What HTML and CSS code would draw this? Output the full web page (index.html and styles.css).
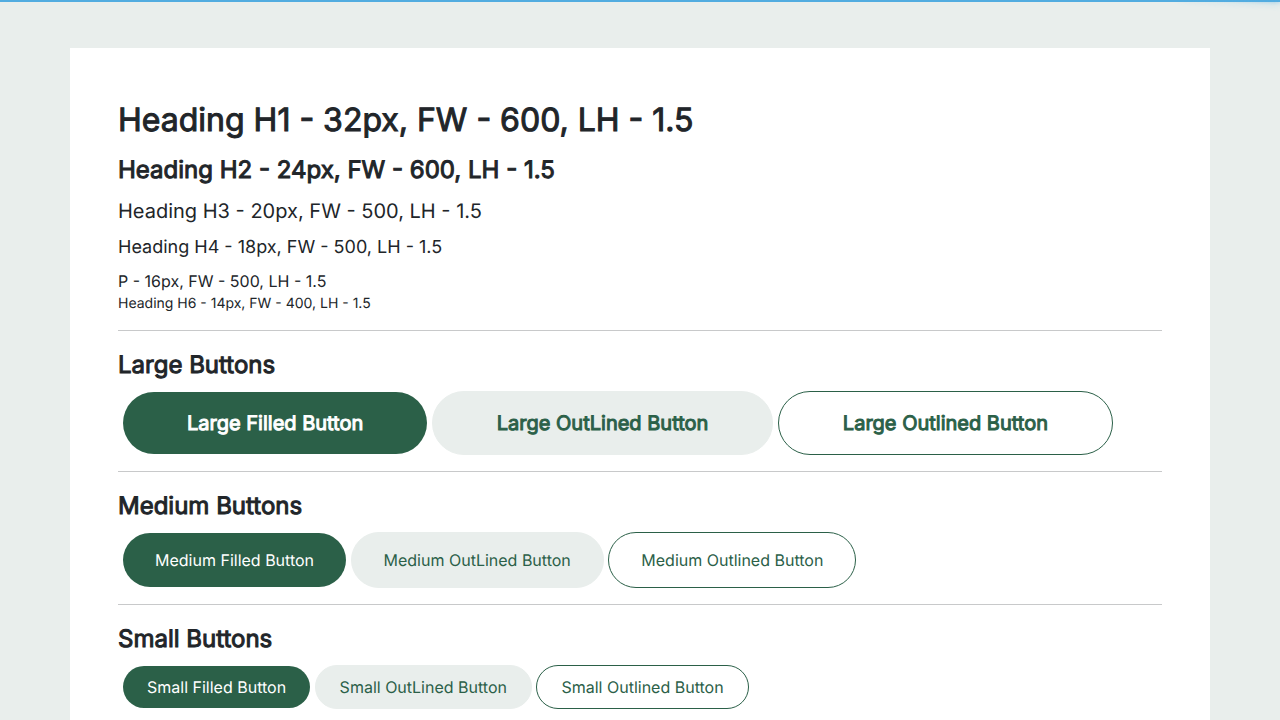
FILE: index.html
```html
<!DOCTYPE html>
<html lang="en">
<head>
<meta charset="utf-8">
<title>Style Guide</title>
<link rel="stylesheet" href="styles.css">
</head>
<body>
<div class="progress"><div class="progress-glow"></div></div>
<main class="container">
  <h1>Heading H1 - 32px, FW - 600, LH - 1.5</h1>
  <h2>Heading H2 - 24px, FW - 600, LH - 1.5</h2>
  <h3>Heading H3 - 20px, FW - 500, LH - 1.5</h3>
  <h4>Heading H4 - 18px, FW - 500, LH - 1.5</h4>
  <p>P - 16px, FW - 500, LH - 1.5</p>
  <h6>Heading H6 - 14px, FW - 400, LH - 1.5</h6>
  <hr>
  <h2>Large Buttons</h2>
  <div class="row">
    <button type="button" class="btn large filled">Large Filled Button</button>
    <button type="button" class="btn large soft">Large OutLined Button</button>
    <button type="button" class="btn large outlined">Large Outlined Button</button>
  </div>
  <hr>
  <h2>Medium Buttons</h2>
  <div class="row">
    <button type="button" class="btn medium filled">Medium Filled Button</button>
    <button type="button" class="btn medium soft">Medium OutLined Button</button>
    <button type="button" class="btn medium outlined">Medium Outlined Button</button>
  </div>
  <hr>
  <h2>Small Buttons</h2>
  <div class="row">
    <button type="button" class="btn small filled">Small Filled Button</button>
    <button type="button" class="btn small soft">Small OutLined Button</button>
    <button type="button" class="btn small outlined">Small Outlined Button</button>
  </div>
</main>
</body>
</html>
```
FILE: styles.css
```css
* { box-sizing: border-box; }
body {
  margin: 0;
  background: #e9eeec;
  color: #212529;
  font-family: Inter, sans-serif;
  font-size: 16px;
  font-weight: 380;
  line-height: 1.5;
  text-rendering: geometricPrecision;
}
.progress {
  position: fixed;
  top: 0;
  left: 0;
  right: 0;
  height: 2px;
  background: #52ace0;
}
.progress-glow {
  width: 100px;
  height: 100%;
  margin-left: auto;
  box-shadow: 0 0 10px #52ace0, 0 0 5px #52ace0;
  transform: rotate(3deg) translate(0, -4px);
}
.container {
  max-width: 1140px;
  margin: 48px auto;
  padding: 48px;
  background: #fff;
}
h1, h2, h3, h4, h6, p { margin: 0; font-weight: inherit; }
h1, h2, h3, h4 { margin-bottom: 8px; }
h1 { font-size: 32px; }
h2 { font-size: 24px; }
h1, h2, .large { font-weight: 400; -webkit-text-stroke: 1px currentColor; }
h3 { font-size: 20px; }
h4 { font-size: 18px; }
h6 { font-size: 14px; }
hr { margin: 16px 0; border: 0; border-top: 1px solid #c8c9ca; }
.row { padding-left: 5px; }
.btn {
  border: 0;
  border-radius: 40px;
  font-family: inherit;
  font-size: 16px;
  font-weight: 400;
  line-height: 24px;
  text-rendering: inherit;
}
.large { padding: 16px 64px; font-size: 20px; line-height: 30px; }
.medium { padding: 15px 32px; }
.small { padding: 9px 24px; }
.filled { background: #2b6048; color: #fff; }
.soft { border: 1px solid #e9eeec; background: #e9eeec; color: #2b6048; }
.outlined { border: 1px solid #2b6048; background: #fff; color: #2b6048; }
```
